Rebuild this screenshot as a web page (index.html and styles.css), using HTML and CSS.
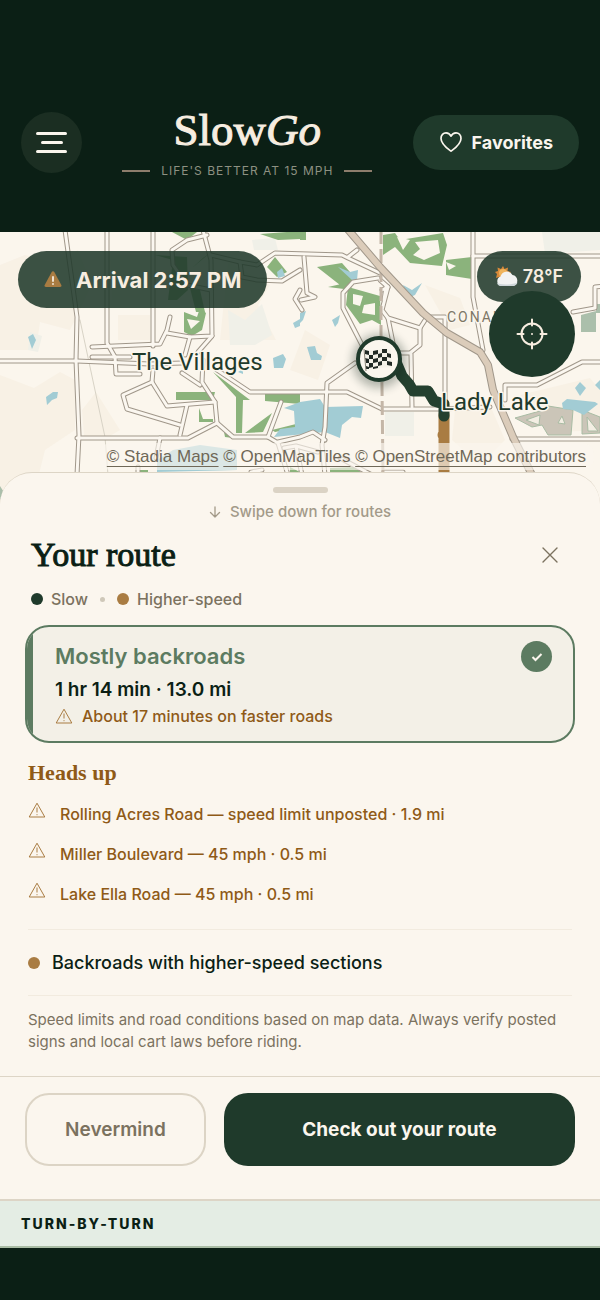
FILE: index.html
```html
<!DOCTYPE html>
<html lang="en">
<head>
    <meta charset="UTF-8">
    <meta name="viewport" content="width=device-width, initial-scale=1.0">
    <title>SlowGo</title>
    <link rel="stylesheet" href="styles.css">
</head>
<body>
    <header class="header">
        <button class="menu-btn" aria-label="Menu">
            <span class="bar"></span>
            <span class="bar short"></span>
            <span class="bar"></span>
        </button>
        <div class="brand">
            <h1 class="logo">Slow<em>Go</em></h1>
            <p class="tagline">Life's better at 15 mph</p>
        </div>
        <button class="favorites">
            <svg width="24" height="24" viewBox="0 0 24 24" fill="none" stroke="currentColor" stroke-width="1.7" stroke-linejoin="round"><path d="M12 21.2C9.5 19.2 2 14.3 2 8.4 2 5 4.300 2.800 7 2.800c2.200 0 4 1.300 5 3.400 1-2.100 2.800-3.400 5-3.400 2.700 0 5 2.200 5 5.600 0 5.900-7.500 10.800-10 12.800z"/></svg>
            Favorites
        </button>
    </header>

    <main>
        <section class="map">
            <svg class="map-canvas" viewBox="0 232 600 280" preserveAspectRatio="xMidYMin slice">
                <defs>
                    <g id="roads">
                        <path d="M65 230L77 317L76 360L79 435L77 475"/>
                        <path d="M107 230V343L115 357L116 374H140"/>
                        <path d="M153 230V346"/>
                        <path d="M-5 361L77 361L150 364L182 363"/>
                        <path d="M92 347L160 344L167 330L170 317"/>
                        <path d="M92 357H130"/>
                        <path d="M167 333L190 337L212 336L211 260L203 230"/>
                        <path d="M211 290L187 285L173 265L172 250L187 240L207 235"/>
                        <path d="M211 255L240 262L257 265L275 253L342 255L348 258L380 273"/>
                        <path d="M240 262L242 277L257 280L282 281L300 270"/>
                        <path d="M304 257L307 293L315 297L301 300"/>
                        <path d="M357 250L348 257"/>
                        <path d="M378 278L353 282L343 293V308L362 345"/>
                        <path d="M380 280L388 287L382 310L388 318L420 328L427 317H445V400"/>
                        <path d="M382 290L388 287M384 300L386 287"/>
                        <path d="M420 328V345L410 353H395L388 318"/>
                        <path d="M411 354L412 407"/>
                        <path d="M473 230V297L483 350"/>
                        <path d="M473 256H605"/>
                        <path d="M573 312L595 308V287L605 286"/>
                        <path d="M605 362H582L537 385H505V400"/>
                        <path d="M512 439H605"/>
                        <path d="M217 370L250 392H347L382 409H440L490 407"/>
                        <path d="M355 363L327 383L325 427L322 445L325 475"/>
                        <path d="M153 370L152 382L123 395L127 409L180 425"/>
                        <path d="M152 382L167 406L215 402"/>
                        <path d="M187 405L180 435"/>
                        <path d="M77 438H188L217 423L215 402L202 382L203 360"/>
                        <path d="M217 423L233 437H268L281 402"/>
                        <path d="M268 437L278 443L288 475M278 442L300 437L313 432L325 440"/>
                        <path d="M182 373L200 385"/>
                        <path d="M160 438L156 458"/>
                        <path d="M190 337L185 355M212 336L198 352"/>
                        <path d="M300 290L295 299L302 310"/>
                        <path d="M284 448L296 446L302 475M296 446L318 452M138 475V467M251 472L262 470"/>
                        <path d="M340 458L372 475M403 472H384"/>
                    </g>
                </defs>

                <!-- land -->
                <rect class="land" x="0" y="232" width="600" height="280"/>
                <path class="patch" d="M0 265L25 255 52 262 78 250 92 285 70 330 40 322 36 350H0zM110 255H150V300H112zM0 375L34 388 60 372 75 380V430L45 450 38 478 0 512zM82 410L96 392 120 430 110 436H84zM118 315H150V340H118zM228 262L270 285 258 305 276 340H220zM305 330L330 345 318 380 290 370zM425 285L460 298 470 325 450 330zM520 395L590 378 600 390V430L560 432zM455 410L490 405 505 440 480 465 452 440z"/>
                <path class="patch cool" d="M228 310L245 320 262 304 272 335 255 345 230 345zM252 240L275 238 278 250H254zM542 232H600V250L545 254zM385 412H414V436H385zM30 332L42 336 38 352 28 350z"/>

                <!-- parks -->
                <path class="park" d="M172 232H197L187 240zM260 234L300 231V239L278 240zM267 267L275 257 287 272 277 277zM184 312L197 317 200 308 206 313 202 330 192 336 184 332zM155 255L187 257 188 290 177 300H168L173 260zM210 253L192 268 203 258z"/>
                <path class="park" d="M190 288L200 290 205 312 196 312z"/>
                <path class="park" d="M300 232H306V240H300zM317 267L342 263 357 280 340 285zM328 287L350 282 352 290zM383 235L395 233 400 240 443 233 447 245 442 266 410 263 395 247 383 255zM446 260L472 257V279L446 275zM348 287L380 296 381 325 372 320 360 324 346 305z"/>
                <path class="park" d="M176 392H215L213 400H176zM213 372L250 400H243L242 433H236V397zM245 433L272 413 263 432zM265 394H300V404L265 401zM199 408L203 419H213V422H199zM223 427L233 438 225 437zM330 468L355 467 363 474H330zM290 467L300 472H290zM300 408L304 420 300 420zM272 430L300 423V427L275 432zM138 470H148V474H138z"/>
                <path class="land" d="M187 319L200 321 191 329zM415 242L438 240 440 253 424 260 413 255 420 249zM397 237L410 240 403 250zM446 262L456 266 449 270zM353 294L363 296 360 306 353 304zM364 305L375 303V315L362 313z"/>
                <path class="scrub" d="M515 418L540 411 548 406 573 410 571 435 548 435 542 425 532 427zM582 410L600 417V433L582 434z"/>
                <path class="scrub inner" d="M526 420L540 415 539 425zM558 423L562 416 565 424zM587 417L598 431H588z"/>
                <path class="park pale" d="M581 315L596 311V332H581zM596 304H600V313H596zM0 486L5 494 0 500z"/>

                <!-- water -->
                <path class="water" d="M28 337L33 334 36 340 32 349zM273 358L283 354 286 359 283 368H274zM277 272L282 268 285 276 278 278zM293 323L300 319V326L295 328zM338 267L350 272 358 270 357 280 352 280zM403 285L412 290 422 283 415 295 408 298zM332 320L340 315 338 323 335 327zM307 347L315 346 317 353 322 356 321 360H311zM300 313L306 311 303 320 300 323zM46 397L53 392H58L57 398 52 400 47 405zM284 408L300 402 320 399 325 407 363 406 361 418 352 417 342 425 340 438 325 432 274 437 280 429 295 427 294 411zM157 460L173 450 200 445 237 450V470L157 472zM575 388L580 382 586 388 580 396zM562 403L567 399 595 402 598 404 584 415 573 410 563 409zM595 385L600 380V390zM238 372L243 369V374z"/>

                <path class="track" d="M80 320L105 437L108 475"/>
                <use href="#roads" class="road-case"/>
                <use href="#roads" class="road-fill"/>
                <path class="rail" d="M381 230V333L382 387L383 475"/>
                <path class="trunk-case" d="M345 226L380 267L423 313L447 333L480 352L488 365L493 390L513 437L532 475"/>
                <path class="trunk" d="M345 226L380 267L423 313L447 333L480 352L488 365L493 390L513 437L532 475"/>

                <!-- planned route -->
                <path class="route fast" d="M444 415V475M443 435H444"/>
                <path class="route slow" d="M396 362L402 376 409 384 413 391H428L434 401 444 404V416"/>

                <text class="place" x="132" y="370">The Villages</text>
                <text class="place" x="441" y="410">Lady Lake</text>
                <text class="place minor" x="447" y="322">CONANT</text>

                <!-- destination marker -->
                <circle class="marker-shadow" cx="379" cy="361" r="27"/>
                <circle class="marker" cx="379" cy="359" r="21"/>
                <g class="flag">
                    <path fill="#f4f1e8" d="M364 350C371 353 381 347 391 350L392 368C382 365 374 372 366 369z"/>
                    <path d="M365 350L369 351V355L365 354zM373 351L378 350V354L373 355zM382 349L387 349V353L382 353zM369 355L373 355V359L369 359zM378 354L382 353V357L378 358zM387 353L391 354V358L387 357zM365 358L369 359V363L366 363zM373 359L378 358V362L373 363zM382 357L387 357V361L382 361zM369 363L373 363V367L369 368zM378 362L382 361V365L378 366zM387 361L392 362V366L387 365zM366 366L369 367V369L366 369zM373 367L378 366V368L373 369z"/>
                    <path fill="none" stroke="#8a8477" d="M364 349L366 371"/>
                </g>
            </svg>

            <div class="arrival">
                <svg width="18" height="17" viewBox="0 0 18 17"><path fill="#a97c42" d="M7.700.9C8.300-.1 9.700-.1 10.300.9L17.300 14c.6 1.200-.1 2-1.200 2H1.900C.8 16 .1 15.200.7 14z"/><path stroke="#f5ede0" stroke-width="1.800" stroke-linecap="round" d="M9 6v4M9 13v.1"/></svg>
                Arrival 2:57 PM
            </div>
            <div class="weather">
                <svg width="24" height="22" viewBox="0 0 24 22">
                    <path fill="#d98a3a" d="M8 0l1.500 3L13 1.500 12.500 5 16 6l-3 3-6 4-3-2L1 12l1-4-2-2 3-1-.5-3.500L6 3z"/>
                    <circle cx="8" cy="7" r="4" fill="#efb45c"/>
                    <path fill="#f2f3f2" d="M6 20a5 5 0 0 1-.5-9.500A6.500 6.500 0 0 1 17.500 9a5.700 5.700 0 0 1 1 11z"/>
                    <path fill="#ced6d9" d="M2 17c3 2 15 2 20.500-.5-.8 2.200-2.300 3.500-4.500 3.500H6c-2 0-3.500-1.200-4-3z"/>
                </svg>
                78°F
            </div>
            <button class="locate" aria-label="My location">
                <svg width="32" height="32" viewBox="0 0 32 32" fill="none" stroke="currentColor" stroke-width="2" stroke-linecap="round"><circle cx="16" cy="16" r="10.500"/><path d="M16 1.500v6M16 24.500v6M1.500 16h6M24.500 16h6"/><circle cx="16" cy="16" r="1" fill="currentColor" stroke="none"/></svg>
            </button>
            <div class="attribution">
                <a href="#">© Stadia Maps</a> <a href="#">© OpenMapTiles</a> <a href="#">© OpenStreetMap contributors</a>
            </div>
        </section>

        <section class="sheet">
            <div class="handle"></div>
            <p class="swipe">
                <svg width="12" height="12" viewBox="0 0 12 12" fill="none" stroke="currentColor" stroke-width="1.300" stroke-linecap="round" stroke-linejoin="round"><path d="M6 1v10M1.500 6.500L6 11l4.500-4.500"/></svg>
                Swipe down for routes
            </p>
            <div class="title-row">
                <h2>Your route</h2>
                <button class="close" aria-label="Close">
                    <svg width="16" height="16" viewBox="0 0 16 16" stroke="currentColor" stroke-width="1.400" stroke-linecap="round"><path d="M1 1l14 14M15 1L1 15"/></svg>
                </button>
            </div>
            <div class="legend">
                <span class="dot"></span> Slow
                <span class="sep"></span>
                <span class="dot fast"></span> Higher-speed
            </div>

            <button class="route-card">
                <span class="route-name">Mostly backroads</span>
                <span class="route-time">1 hr 14 min · 13.0 mi</span>
                <span class="route-warn">
                    <svg class="warn-icon" viewBox="0 0 18 16"><path d="M9 1.200L16.800 15H1.200zM9 5.500v5M9 12.200v1"/></svg>
                    About 17 minutes on faster roads
                </span>
                <span class="check">
                    <svg width="12" height="10" viewBox="0 0 12 10" fill="none" stroke="currentColor" stroke-width="2"><path d="M1.500 5l3 3 6-6"/></svg>
                </span>
            </button>

            <div class="details">
                <h3>Heads up</h3>
                <ul class="warnings">
                    <li><svg class="warn-icon" viewBox="0 0 18 16"><path d="M9 1.200L16.800 15H1.200zM9 5.500v5M9 12.200v1"/></svg>Rolling Acres Road — speed limit unposted · 1.9 mi</li>
                    <li><svg class="warn-icon" viewBox="0 0 18 16"><path d="M9 1.200L16.800 15H1.200zM9 5.500v5M9 12.200v1"/></svg>Miller Boulevard — 45 mph · 0.5 mi</li>
                    <li><svg class="warn-icon" viewBox="0 0 18 16"><path d="M9 1.200L16.800 15H1.200zM9 5.500v5M9 12.200v1"/></svg>Lake Ella Road — 45 mph · 0.5 mi</li>
                </ul>
                <div class="summary"><span class="dot fast"></span>Backroads with higher-speed sections</div>
                <p class="note">Speed limits and road conditions based on map data. Always verify posted signs and local cart laws before riding.</p>
            </div>

            <div class="actions">
                <button class="btn-secondary">Nevermind</button>
                <button class="btn-primary">Check out your route</button>
            </div>
        </section>

        <h2 class="turns">Turn-by-turn</h2>
    </main>
</body>
</html>
```

FILE: styles.css
```css
* {
    box-sizing: border-box;
}
body {
    margin: 0;
    background-color: #0b1f15;
    font-family: Inter, 'Liberation Sans', sans-serif;
    color: #0b1f15;
}
h1, h2, h3, p, ul {
    margin: 0;
    padding: 0;
}
button {
    font-family: inherit;
    border: none;
    cursor: pointer;
}

/* header */
.header {
    display: flex;
    justify-content: space-between;
    align-items: center;
    padding: 105px 21px 53px;
}
.menu-btn {
    display: flex;
    flex-direction: column;
    align-items: center;
    justify-content: center;
    gap: 6px;
    width: 61px;
    height: 61px;
    padding: 0;
    border-radius: 50%;
    background-color: #1b2e22;
}
.bar {
    width: 31px;
    height: 3px;
    border-radius: 2px;
    background-color: #fbf6ee;
}
.bar.short {
    width: 22px;
}
.brand {
    display: flex;
    flex-direction: column;
    align-items: center;
    gap: 7px;
}
.logo {
    font-family: 'Liberation Serif', serif;
    font-size: 45px;
    line-height: 50px;
    font-weight: 400;
    -webkit-text-stroke: 1px #f7ede0;
    color: #f7ede0;
}
.tagline {
    display: flex;
    align-items: center;
    gap: 11px;
    font-size: 12px;
    line-height: 17px;
    letter-spacing: 1px;
    text-transform: uppercase;
    color: #8d9182;
}
.tagline::before, .tagline::after {
    content: "";
    width: 28px;
    height: 2px;
    background-color: #8d7d6c;
}
.favorites {
    display: flex;
    align-items: center;
    gap: 9px;
    height: 55px;
    padding: 0 26px;
    border-radius: 28px;
    background-color: #1f3a2b;
    color: #fbf6ee;
    font-size: 18px;
    font-weight: 700;
}

/* map */
.map {
    position: relative;
    height: 280px;
    overflow: hidden;
    background-color: #fbf6ed;
}
.map-canvas {
    display: block;
    width: 100%;
    height: 100%;
}
.land {
    fill: #fbf6ed;
}
.patch {
    fill: #f8f1e5;
}
.patch.cool {
    fill: #f0f0e8;
}
.park {
    fill: #8bb37c;
}
.park.pale {
    fill: #abbfab;
}
.water {
    fill: #a2ccd4;
}
.scrub {
    fill: #cbc5b8;
    stroke: #a9bca4;
}
.scrub.inner {
    fill: #f3eee3;
}
.road-case, .road-fill, .track, .rail, .trunk, .trunk-case, .route {
    fill: none;
    stroke-linejoin: round;
    stroke-linecap: round;
}
.road-case {
    stroke: #a0978a;
    stroke-width: 5;
}
.road-fill {
    stroke: #fbf7f0;
    stroke-width: 3;
}
.track {
    stroke: #d8d3c6;
}
.rail {
    stroke: #c4b6a7;
    stroke-width: 3;
    stroke-dasharray: 14 5;
    stroke-linecap: butt;
}
.trunk-case {
    stroke: #a0978a;
    stroke-width: 8;
}
.trunk {
    stroke: #dbccba;
    stroke-width: 6;
}
.route {
    stroke-width: 11;
}
.route.fast {
    stroke: #a97c42;
}
.route.slow {
    stroke: #24402f;
}
.place {
    font-family: Roboto, sans-serif;
    font-size: 24px;
    fill: #1f3a2b;
    stroke: #fbf6ed;
    stroke-width: 3px;
    stroke-linejoin: round;
    paint-order: stroke;
}
.place.minor {
    font-size: 14px;
    letter-spacing: 2px;
    fill: #7d7666;
}
.marker {
    fill: #fbf6ee;
    stroke: #1f3a2b;
    stroke-width: 4;
}
.marker-shadow {
    fill: #0b1f15;
    opacity: 0.3;
    filter: blur(5px);
}
.flag {
    fill: #222a25;
}
.arrival, .weather {
    position: absolute;
    top: 19px;
    display: flex;
    align-items: center;
    background-color: rgba(31, 56, 43, 0.87);
    color: #f7ede0;
    font-weight: 600;
}
.arrival {
    left: 18px;
    gap: 14px;
    height: 57px;
    padding: 0 25px 0 26px;
    border-radius: 29px;
    font-size: 22px;
    font-weight: 700;
}
.weather {
    right: 19px;
    gap: 4px;
    height: 51px;
    padding: 0 18px;
    border-radius: 26px;
    font-size: 18px;
}
.locate {
    position: absolute;
    top: 59px;
    right: 25px;
    display: flex;
    align-items: center;
    justify-content: center;
    width: 86px;
    height: 86px;
    padding: 0;
    border-radius: 50%;
    background-color: #1f3a2b;
    color: #f7ede0;
}
.attribution {
    position: absolute;
    right: 6px;
    bottom: 42px;
    padding: 0 8px;
    border-radius: 12px;
    background-color: rgba(251, 246, 238, 0.65);
    font-family: 'Liberation Sans', sans-serif;
    font-size: 17px;
    line-height: 27px;
    white-space: nowrap;
}
.attribution a {
    color: #6f6858;
    text-underline-offset: 4px;
}

/* route sheet */
.sheet {
    position: relative;
    margin-top: -40px;
    padding-top: 14px;
    border-top: 1px solid #ddd5c6;
    border-radius: 32px 32px 0 0;
    background-color: #fbf6ee;
}
.handle {
    width: 55px;
    height: 6px;
    margin: 0 auto;
    border-radius: 3px;
    background-color: #dbd3c5;
}
.swipe {
    display: flex;
    align-items: center;
    justify-content: center;
    gap: 9px;
    margin-top: 8px;
    font-size: 15px;
    line-height: 22px;
    font-weight: 500;
    color: #a39a89;
}
.title-row {
    display: flex;
    align-items: center;
    justify-content: space-between;
    margin-top: 12px;
    padding: 0 31px;
}
.title-row h2 {
    font-family: 'Liberation Serif', serif;
    font-size: 34px;
    line-height: 40px;
    font-weight: 400;
    -webkit-text-stroke: 1px #0b1f15;
}
.close {
    display: flex;
    padding: 11px;
    background: none;
    color: #7b725f;
}
.legend {
    display: flex;
    align-items: center;
    gap: 8px;
    margin-top: 14px;
    padding: 0 31px;
    font-size: 16px;
    line-height: 20px;
    font-weight: 500;
    color: #7b725f;
}
.dot {
    flex: none;
    width: 12px;
    height: 12px;
    border-radius: 50%;
    background-color: #1f3a2b;
}
.dot.fast {
    background-color: #a97c42;
}
.sep {
    width: 5px;
    height: 5px;
    margin: 0 4px;
    border-radius: 50%;
    background-color: #cfc8b9;
}
.route-card {
    position: relative;
    display: flex;
    flex-direction: column;
    align-items: flex-start;
    width: calc(100% - 50px);
    margin: 16px 25px 0;
    padding: 15px 20px 14px 28px;
    overflow: hidden;
    border: 2px solid #5c7b61;
    border-radius: 24px;
    background-color: #f3f0e7;
    text-align: left;
}
.route-card::before {
    content: "";
    position: absolute;
    left: 0;
    top: 0;
    bottom: 0;
    width: 6px;
    background-color: #5c7b61;
}
.route-name {
    font-size: 22px;
    line-height: 28px;
    font-weight: 600;
    color: #5c7b61;
}
.route-time {
    margin-top: 8px;
    font-size: 19px;
    line-height: 24px;
    font-weight: 600;
    color: #0b1f15;
}
.route-warn {
    display: flex;
    align-items: center;
    gap: 9px;
    margin-top: 3px;
    font-size: 16px;
    line-height: 22px;
    font-weight: 500;
    color: #8f5a17;
}
.warn-icon {
    flex: none;
    width: 18px;
    height: 16px;
    fill: none;
    stroke: #a97c42;
    stroke-width: 1px;
    stroke-linejoin: round;
}
.check {
    position: absolute;
    top: 14px;
    right: 21px;
    display: flex;
    align-items: center;
    justify-content: center;
    width: 31px;
    height: 31px;
    border-radius: 50%;
    background-color: #5c7b61;
    color: #fbf6ee;
}
.details {
    padding: 16px 28px 23px;
}
.details h3 {
    font-family: 'Liberation Serif', serif;
    font-size: 22px;
    line-height: 28px;
    color: #8f5a17;
}
.warnings {
    list-style-type: none;
    padding: 7px 0 15px;
    border-bottom: 1px solid #f2ebdf;
}
.warnings li {
    display: flex;
    gap: 14px;
    padding: 8px 0;
    font-size: 16px;
    line-height: 24px;
    font-weight: 500;
    color: #8f5a17;
}
.summary {
    display: flex;
    align-items: center;
    gap: 12px;
    padding: 20px 0;
    border-bottom: 1px solid #f2ebdf;
    font-size: 18px;
    line-height: 25px;
    font-weight: 500;
}
.note {
    margin-top: 13px;
    font-size: 15px;
    line-height: 22px;
    color: #7b725f;
}
.actions {
    display: grid;
    grid-template-columns: 34fr 66fr;
    gap: 18px;
    padding: 16px 25px 33px;
    border-top: 1px solid #ddd5c6;
}
.actions button {
    height: 73px;
    border-radius: 24px;
    font-size: 19px;
    font-weight: 600;
}
.actions .btn-secondary {
    border: 2px solid #dcd4c5;
    background: none;
    color: #7b725f;
}
.actions .btn-primary {
    background-color: #1f3a2b;
    color: #fbf6ee;
    font-weight: 700;
}
.turns {
    padding: 12px 21px;
    border-top: 2px solid #ddd5c6;
    border-bottom: 2px solid #a9bca4;
    background-color: #e4ede4;
    font-size: 14px;
    line-height: 21px;
    font-weight: 800;
    letter-spacing: 2px;
    text-transform: uppercase;
}
```
